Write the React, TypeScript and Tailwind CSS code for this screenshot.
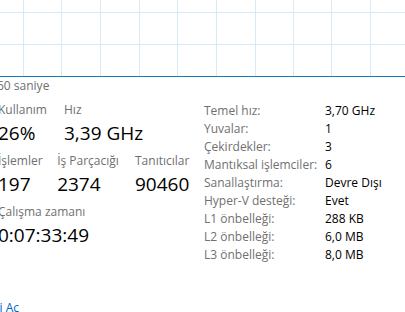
import React from "react";

const font = { fontFamily: '"Open Sans", "Noto Sans", sans-serif' };

const vLines = [23, 61, 100, 139, 177, 216, 255, 293, 331, 370];
const hLines = [12, 44];

const specs: [string, string][] = [
  ["Temel hız:", "3,70 GHz"],
  ["Yuvalar:", "1"],
  ["Çekirdekler:", "3"],
  ["Mantıksal işlemciler:", "6"],
  ["Sanallaştırma:", "Devre Dışı"],
  ["Hyper-V desteği:", "Evet"],
  ["L1 önbelleği:", "288 KB"],
  ["L2 önbelleği:", "6,0 MB"],
  ["L3 önbelleği:", "8,0 MB"],
];

function Stat({ label, value, w }: { label: string; value: string; w: string }) {
  return (
    <div className={`flex flex-col ${w}`}>
      <span className="text-[12px] leading-[16px] text-[#707070]">{label}</span>
      <span className="mt-[3px] whitespace-nowrap text-[19px] leading-[24px] text-black">{value}</span>
    </div>
  );
}

export default function App() {
  return (
    <div className="h-[312px] w-[405px] overflow-hidden bg-white" style={font}>
      {/* usage graph */}
      <svg width="405" height="78" className="block">
        {vLines.map((x) => (
          <line key={x} x1={x + 0.5} y1={0} x2={x + 0.5} y2={76} stroke="#d9eaf7" strokeWidth={1} />
        ))}
        {hLines.map((y) => (
          <line key={y} x1={0} y1={y + 0.5} x2={405} y2={y + 0.5} stroke="#d9eaf7" strokeWidth={1} />
        ))}
        <line x1={0} y1={76.5} x2={405} y2={76.5} stroke="#117dbb" strokeWidth={1} />
      </svg>
      <div className="-ml-[3px] text-[12px] leading-[16px] text-[#707070]">60 saniye</div>

      <div className="mt-[8px] flex">
        {/* left stats */}
        <div className="-ml-[2px] flex w-[206px] flex-col">
          <div className="flex">
            <Stat label="Kullanım" value="26%" w="w-[66px]" />
            <Stat label="Hız" value="3,39 GHz" w="w-[90px]" />
          </div>
          <div className="mt-[8px] flex">
            <Stat label="İşlemler" value="197" w="w-[60px]" />
            <Stat label="İş Parçacığı" value="2374" w="w-[79px]" />
            <Stat label="Tanıtıcılar" value="90460" w="w-[70px]" />
          </div>
          <div className="mt-[8px] flex">
            <Stat label="Çalışma zamanı" value="0:07:33:49" w="w-[120px]" />
          </div>
          <div className="-ml-[179px] mt-[53px] flex w-[200px] justify-end whitespace-nowrap text-[12px] leading-[16px] text-[#0066cc]">
            Kaynak İzleyicisini Aç
          </div>
        </div>

        {/* right specs */}
        <div className="flex flex-col">
          {specs.map(([k, v]) => (
            <div key={k} className="flex text-[12px] leading-[18px]">
              <span className="w-[121px] text-[#707070]">{k}</span>
              <span className="text-black">{v}</span>
            </div>
          ))}
        </div>
      </div>
    </div>
  );
}
